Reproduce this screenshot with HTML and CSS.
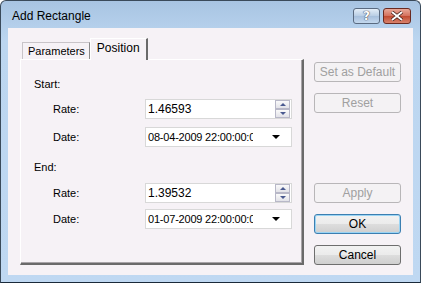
FILE: index.html
```html
<!DOCTYPE html>
<html lang="en">
<head>
<meta charset="UTF-8">
<title>Add Rectangle</title>
<link rel="stylesheet" href="styles.css">
</head>
<body>

<div class="window">
  <div class="titlebar">
    <span class="title">Add Rectangle</span>
    <div class="caption-buttons">
      <div class="cap-btn help">?</div>
      <div class="cap-btn close">
        <svg width="14" height="10" viewBox="0 0 14 10">
          <path d="M2 1 L12 9 M12 1 L2 9" stroke="#3a1a14" stroke-width="3.4"/>
          <path d="M2 1 L12 9 M12 1 L2 9" stroke="#fff" stroke-width="2"/>
        </svg>
      </div>
    </div>
  </div>

  <div class="client">
    <div class="tabs">
      <div class="tab-strip">
        <div class="tab">Parameters</div>
        <div class="tab active">Position</div>
      </div>
      <div class="pane">
        <div class="group-label">Start:</div>
        <div class="field">
          <label>Rate:</label>
          <div class="spin">
            <span class="value">1.46593</span>
            <div class="spin-btns">
              <div class="spin-up"></div>
              <div class="spin-down"></div>
            </div>
          </div>
        </div>
        <div class="field">
          <label>Date:</label>
          <div class="combo">
            <span class="value">08-04-2009 22:00:00:00</span>
            <span class="arrow"></span>
          </div>
        </div>

        <div class="group-label end">End:</div>
        <div class="field tight">
          <label>Rate:</label>
          <div class="spin">
            <span class="value">1.39532</span>
            <div class="spin-btns">
              <div class="spin-up"></div>
              <div class="spin-down"></div>
            </div>
          </div>
        </div>
        <div class="field">
          <label>Date:</label>
          <div class="combo">
            <span class="value">01-07-2009 22:00:00:00</span>
            <span class="arrow"></span>
          </div>
        </div>
      </div>
    </div>

    <div class="side">
      <div class="btn-group">
        <button class="btn" disabled>Set as Default</button>
        <button class="btn" disabled>Reset</button>
      </div>
      <div class="btn-group">
        <button class="btn" disabled>Apply</button>
        <button class="btn default">OK</button>
        <button class="btn">Cancel</button>
      </div>
    </div>
  </div>
</div>

</body>
</html>
```

FILE: styles.css
```css
body {
  margin: 0;
  font-family: "Liberation Sans", Arial, sans-serif;
  font-size: 11px;
  color: #000;
}
.window {
  width: 421px;
  height: 283px;
  box-sizing: border-box;
  border: 1px solid #3a4a5a;
  border-bottom-color: #1a2a3a;
  border-radius: 6px 6px 0 0;
  background: linear-gradient(#a8c4e2, #bcd6f0 40px, #bfd8f2);
  display: flex;
  flex-direction: column;
}
.titlebar {
  height: 27px;
  display: flex;
  align-items: center;
  justify-content: space-between;
  padding: 0 9px 0 11px;
}
.title {
  font-family: "Liberation Sans", Arial, sans-serif;
  font-size: 12px;
  color: #000;
  margin-top: 2px;
}
.caption-buttons {
  display: flex;
  gap: 3px;
  margin-top: 2px;
}
.cap-btn {
  height: 14px;
  border: 1px solid #5a6a80;
  border-radius: 3px;
  display: flex;
  align-items: center;
  justify-content: center;
}
.help {
  width: 25px;
  background: linear-gradient(#e4eef8, #b8cde4 50%, #a6bfdc 51%, #c4d8ee);
  font-family: "DejaVu Sans", sans-serif;
  font-weight: bold;
  font-size: 12px;
  color: #fff;
  text-shadow: 0 0 1px #334, 0 0 1px #334;
}
.close {
  width: 26px;
  border-color: #6a2a20;
  background: linear-gradient(#e8a898, #d4705c 50%, #c04a30 51%, #d8826c);
}
.client {
  flex: 1;
  margin: 0 7px 7px 7px;
  background: #f6f2f6;
  display: flex;
  padding: 10px 12px 10px 12px;
  gap: 10px;
}
.tabs {
  width: 284px;
  display: flex;
  flex-direction: column;
}
.tab-strip {
  display: flex;
  height: 21px;
  align-items: flex-end;
  padding-left: 2px;
}
.tab {
  height: 16px;
  padding: 0 4px 0 5px;
  border: 1px solid #c8c4c8;
  border-bottom: none;
  border-right-color: #8a8a8a;
  background: #f6f2f6;
  display: flex;
  align-items: center;
}
.tab.active {
  position: relative;
  box-sizing: border-box;
  height: 22px;
  margin-bottom: -1px;
  padding: 2px 6px 0 6px;
  border-top-color: #fff;
  border-left-color: #fff;
  border-right: 2px solid #6a6a6a;
  align-items: flex-start;
  font-size: 12px;
}
.pane {
  flex: 1;
  border: 1px solid #fff;
  border-right: 2px solid #6a6a6a;
  border-bottom: 2px solid #6a6a6a;
  box-shadow: inset -1px -1px 0 #a8a4a8;
  padding: 18px 0 0 13px;
}
.group-label {
  height: 14px;
  margin-bottom: 7px;
}
.group-label.end {
  margin-top: 14px;
  margin-bottom: 8px;
}
.field {
  display: flex;
  align-items: center;
  height: 20px;
  margin-bottom: 8px;
}
.field.tight {
  margin-bottom: 6px;
}
.field label {
  width: 92px;
  padding-left: 19px;
}
.spin, .combo {
  width: 147px;
  height: 20px;
  box-sizing: border-box;
  border: 1px solid #d8d8d8;
  background: #fff;
  display: flex;
  align-items: center;
  font-size: 12px;
  padding-left: 2px;
}
.value {
  flex: 1;
  overflow: hidden;
  white-space: nowrap;
}
.spin-btns {
  width: 15px;
  height: 18px;
  display: flex;
  flex-direction: column;
  margin-right: 1px;
}
.spin-up, .spin-down {
  flex: 1;
  border: 1px solid #b8b8c8;
  background: linear-gradient(#fafafa, #e2e2e8);
  position: relative;
}
.spin-up::after, .spin-down::after {
  content: "";
  position: absolute;
  left: 4px;
  top: 2px;
  border-left: 3px solid transparent;
  border-right: 3px solid transparent;
}
.spin-up::after {
  border-bottom: 3px solid #4a5a90;
}
.spin-down::after {
  border-top: 3px solid #4a5a90;
}
.combo .value {
  flex: none;
  width: 105px;
  font-size: 11px;
  letter-spacing: -0.2px;
}
.arrow {
  margin-left: 19px;
  border-left: 4px solid transparent;
  border-right: 4px solid transparent;
  border-top: 4px solid #000;
}
.side {
  width: 87px;
  padding-top: 24px;
  display: flex;
  flex-direction: column;
  justify-content: space-between;
}
.btn-group {
  display: flex;
  flex-direction: column;
  gap: 11px;
}
.btn {
  height: 20px;
  font-family: "Liberation Sans", Arial, sans-serif;
  font-size: 12px;
  border: 1px solid #6e6e6e;
  border-radius: 3px;
  background: linear-gradient(#f2f2f2, #ebebeb 50%, #dddddd 51%, #cfcfcf);
  color: #000;
  padding: 0;
}
.btn:disabled {
  border-color: #b8b6b8;
  background: #f4f2f4;
  color: #a0a0a0;
}
.btn.default {
  border-color: #3c7fb1;
  box-shadow: inset 0 0 0 1px #9ad4f4;
}
```
